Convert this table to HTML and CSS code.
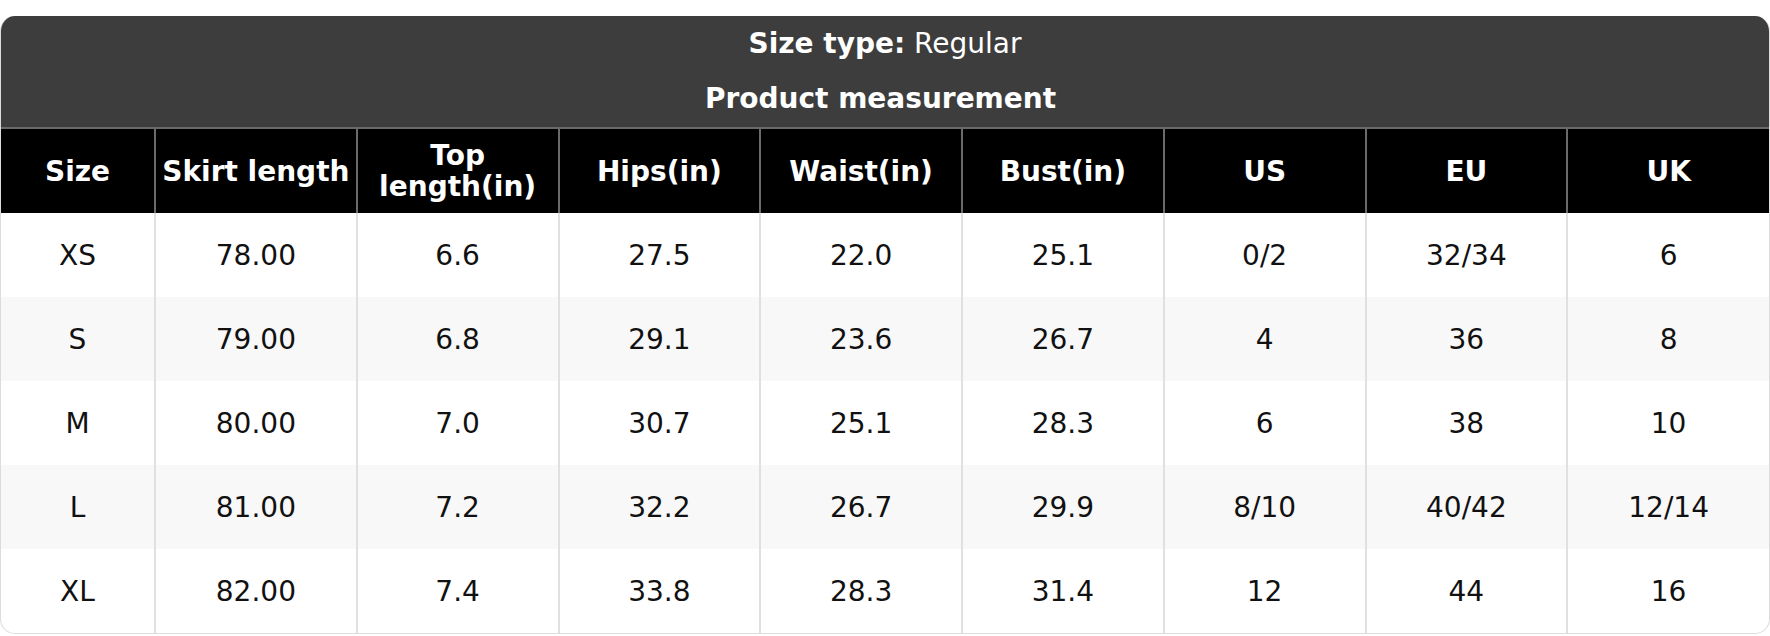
FILE: index.html
```html
<!DOCTYPE html>
<html>
<head>
<meta charset="utf-8">
<link rel="stylesheet" href="styles.css">
</head>
<body>
<div class="card">
  <div class="caption">
    <div class="cap-line cap-top"><b>Size type:</b> Regular</div>
    <div class="cap-line cap-bottom"><b>Product measurement</b></div>
  </div>
  <table class="sizes">
    <colgroup>
      <col class="c-first">
      <col><col><col><col><col><col><col><col>
    </colgroup>
    <thead>
      <tr>
        <th>Size</th><th>Skirt length</th><th>Top<br>length(in)</th><th>Hips(in)</th><th>Waist(in)</th><th>Bust(in)</th><th>US</th><th>EU</th><th>UK</th>
      </tr>
    </thead>
    <tbody>
      <tr><td>XS</td><td>78.00</td><td>6.6</td><td>27.5</td><td>22.0</td><td>25.1</td><td>0/2</td><td>32/34</td><td>6</td></tr>
      <tr><td>S</td><td>79.00</td><td>6.8</td><td>29.1</td><td>23.6</td><td>26.7</td><td>4</td><td>36</td><td>8</td></tr>
      <tr><td>M</td><td>80.00</td><td>7.0</td><td>30.7</td><td>25.1</td><td>28.3</td><td>6</td><td>38</td><td>10</td></tr>
      <tr><td>L</td><td>81.00</td><td>7.2</td><td>32.2</td><td>26.7</td><td>29.9</td><td>8/10</td><td>40/42</td><td>12/14</td></tr>
      <tr><td>XL</td><td>82.00</td><td>7.4</td><td>33.8</td><td>28.3</td><td>31.4</td><td>12</td><td>44</td><td>16</td></tr>
    </tbody>
  </table>
</div>
</body>
</html>
```
FILE: styles.css
```css
html, body {
  margin: 0;
  padding: 0;
  background: #fff;
}
body {
  padding-top: 16px;
  font-family: "DejaVu Sans", Verdana, sans-serif;
  color: #111;
}
.card {
  border: 1px solid #dcdcdc;
  border-top: none;
  border-radius: 15px;
  overflow: hidden;
  background: #fff;
}
.caption {
  background: #3d3d3d;
  color: #fff;
  text-align: center;
  font-size: 28px;
  height: 111px;
  display: flex;
  flex-direction: column;
}
.cap-line {
  display: flex;
  align-items: center;
  justify-content: center;
  white-space: pre;
}
.cap-top {
  height: 54px;
}
.cap-bottom {
  height: 57px;
  padding-right: 9px;
}
.cap-line b {
  font-weight: bold;
}
.sizes {
  width: 100%;
  table-layout: fixed;
  border-collapse: collapse;
}
.c-first {
  width: 154px;
}
.sizes th {
  background: #000;
  color: #fff;
  font-size: 28px;
  font-weight: bold;
  line-height: 31px;
  height: 84px;
  padding: 0 4px;
  border-top: 2px solid #6a6a6a;
  border-left: 2px solid #6a6a6a;
  text-align: center;
  vertical-align: middle;
}
.sizes th:first-child {
  border-left: none;
}
.sizes td {
  height: 84px;
  padding: 0;
  font-size: 28px;
  text-align: center;
  vertical-align: middle;
  border-left: 2px solid #e0e0e0;
  color: #111;
}
.sizes td:first-child {
  border-left: none;
}
.sizes tbody tr:nth-child(even) td {
  background: #f8f8f8;
}
```
